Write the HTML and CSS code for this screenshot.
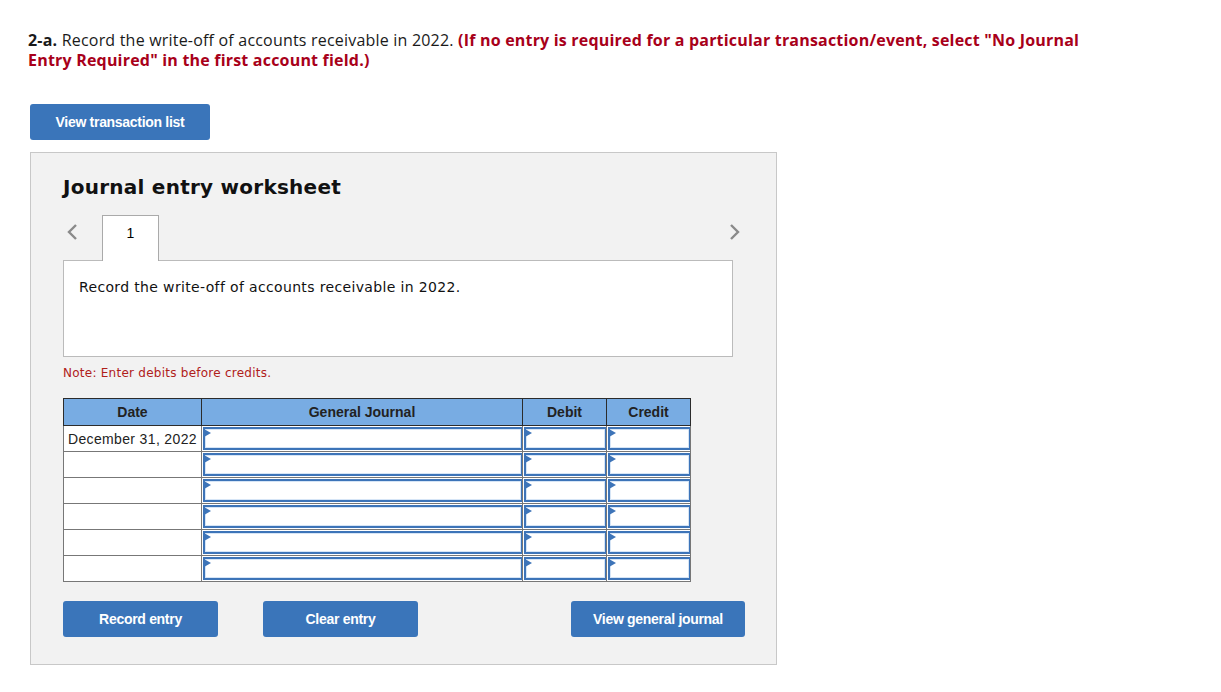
FILE: index.html
```html
<!DOCTYPE html>
<html>
<head>
<meta charset="utf-8">
<link rel="stylesheet" href="styles.css">
</head>
<body>
<div class="page">
  <p class="question"><b>2-a.</b> Record the write-off of accounts receivable in 2022. <span class="hint">(If no entry is required for a particular transaction/event, select "No Journal<br>Entry Required" in the first account field.)</span></p>
  <button class="btn btn-list">View transaction list</button>
  <div class="worksheet">
    <h2 class="ws-title">Journal entry worksheet</h2>
    <div class="tabs">
      <span class="chev chev-left"><svg width="12" height="18" viewBox="0 0 12 18"><polyline points="10,2 3,9 10,16" fill="none" stroke="#8a8a8a" stroke-width="2.4"/></svg></span>
      <span class="tab">1</span>
      <span class="tabs-fill"></span>
      <span class="chev chev-right"><svg width="12" height="18" viewBox="0 0 12 18"><polyline points="2,2 9,9 2,16" fill="none" stroke="#8a8a8a" stroke-width="2.4"/></svg></span>
    </div>
    <div class="desc">Record the write-off of accounts receivable in 2022.</div>
    <p class="note">Note: Enter debits before credits.</p>
    <table class="journal">
      <thead>
        <tr><th class="c-date">Date</th><th class="c-acct">General Journal</th><th class="c-amt">Debit</th><th class="c-amt">Credit</th></tr>
      </thead>
      <tbody>
        <tr><td class="date">December 31, 2022</td><td class="in"><div class="field"></div></td><td class="in"><div class="field"></div></td><td class="in"><div class="field"></div></td></tr>
        <tr><td class="date"></td><td class="in"><div class="field"></div></td><td class="in"><div class="field"></div></td><td class="in"><div class="field"></div></td></tr>
        <tr><td class="date"></td><td class="in"><div class="field"></div></td><td class="in"><div class="field"></div></td><td class="in"><div class="field"></div></td></tr>
        <tr><td class="date"></td><td class="in"><div class="field"></div></td><td class="in"><div class="field"></div></td><td class="in"><div class="field"></div></td></tr>
        <tr><td class="date"></td><td class="in"><div class="field"></div></td><td class="in"><div class="field"></div></td><td class="in"><div class="field"></div></td></tr>
        <tr><td class="date"></td><td class="in"><div class="field"></div></td><td class="in"><div class="field"></div></td><td class="in"><div class="field"></div></td></tr>
      </tbody>
    </table>
    <div class="actions">
      <button class="btn btn-act">Record entry</button>
      <button class="btn btn-act btn-clear">Clear entry</button>
      <button class="btn btn-act btn-view">View general journal</button>
    </div>
  </div>
</div>
</body>
</html>
```
FILE: styles.css
```css
html, body { margin: 0; padding: 0; background: #fff; }
.page { padding: 30px 0 0 28px; }
.question {
  margin: 0;
  width: 1180px;
  font-family: "Open Sans", Lato, sans-serif;
  font-size: 16px;
  line-height: 20px;
  letter-spacing: 0.2px;
  color: #1a1a1a;
}
.question b { font-weight: 700; }
.hint { color: #a8001a; font-weight: 700; }
.btn {
  background: #3a75ba;
  color: #fff;
  border: none;
  border-radius: 3px;
  font-family: "Liberation Sans", Arial, sans-serif;
  font-weight: 700;
  font-size: 14px;
  letter-spacing: -0.3px;
  height: 36px;
  padding: 0;
  cursor: pointer;
}
.btn-list { display: block; margin: 34px 0 12px 2px; width: 180px; }
.worksheet {
  margin-left: 2px;
  width: 747px;
  height: 513px;
  background: #f2f2f2;
  border: 1px solid #c8c8c8;
  padding: 0 0 0 32px;
  box-sizing: border-box;
}
.ws-title {
  margin: 21px 0 0 0;
  font-family: "DejaVu Sans", Verdana, sans-serif;
  font-size: 20px;
  font-weight: 700;
  line-height: 26px;
  letter-spacing: 0.25px;
  color: #111;
}
.tabs {
  display: flex;
  align-items: flex-end;
  margin-top: 15px;
  width: 678px;
  height: 45px;
}
.chev {
  width: 39px;
  display: flex;
  align-items: center;
  justify-content: flex-start;
  height: 45px;
  padding-bottom: 12px;
  padding-left: 3px;
  box-sizing: border-box;
}
.tab {
  width: 57px;
  height: 46px;
  box-sizing: border-box;
  background: #fff;
  border: 1px solid #aaa;
  border-bottom: none;
  font-family: "Liberation Sans", Arial, sans-serif;
  font-size: 14px;
  text-align: center;
  padding-top: 9px;
  position: relative;
  z-index: 1;
  margin-bottom: -1px;
}
.tabs-fill { flex: 1; }
.chev-right { justify-content: flex-end; width: 30px; padding-left: 0; }
.desc {
  width: 670px;
  height: 97px;
  box-sizing: border-box;
  background: #fff;
  border: 1px solid #bbb;
  padding: 18px 15px;
  font-family: "DejaVu Sans", Verdana, sans-serif;
  font-size: 14px;
  color: #111;
  letter-spacing: 0.35px;
}
.note {
  margin: 8px 0 0 0;
  font-family: "DejaVu Sans", Verdana, sans-serif;
  font-size: 12px;
  line-height: 16px;
  color: #b0201a;
  letter-spacing: 0.25px;
}
.journal {
  margin-top: 17px;
  border-collapse: collapse;
  font-family: "Liberation Sans", Arial, sans-serif;
  font-size: 14px;
  table-layout: fixed;
  width: 628px;
}
.journal th {
  background: #78ace3;
  border: 1px solid #2c2c2c;
  height: 26px;
  padding: 0;
  font-weight: 700;
  color: #222;
  font-size: 14px;
}
.c-date { width: 137px; }
.c-acct { width: 320px; }
.c-amt { width: 83px; }
.journal td {
  border: 1px solid #777;
  height: 24px;
  padding: 0;
  background: #fff;
}
.journal td.date { padding-left: 4px; color: #222; letter-spacing: 0.35px; }
.journal td.in { padding: 1px 0 0 1px; vertical-align: top; }
.field {
  position: relative;
  height: 23px;
  box-sizing: border-box;
  border: 2px solid #3d74b8;
  border-right-width: 1px;
  box-shadow: inset 0 0 0 1px #d6e5f6;
  background: #fff;
}
.field::before {
  content: "";
  position: absolute;
  left: -1px;
  top: 0;
  width: 0;
  height: 0;
  border-left: 7px solid #3d74b8;
  border-top: 4px solid transparent;
  border-bottom: 4px solid transparent;
}
.actions {
  display: flex;
  margin-top: 19px;
}
.btn-act { width: 155px; }
.btn-clear { margin-left: 45px; }
.btn-view { margin-left: 153px; width: 174px; }
```
